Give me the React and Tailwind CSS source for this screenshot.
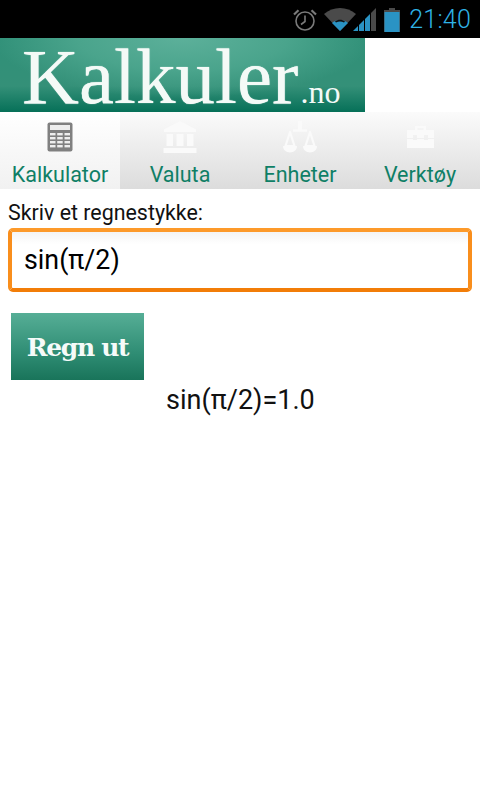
import React from 'react';

const green = 'text-[#0f7f66]';

const StatusIcons = () => (
  <div className="flex items-center h-full pr-[9px] justify-end">
    <svg width="26" height="26" viewBox="0 0 26 26" className="mr-[6px] mt-[1px]" fill="none" stroke="#7a7a7a" strokeWidth="1.6">
      <circle cx="13" cy="14" r="9" />
      <path d="M13 8.5V14.5L9 17.5" />
      <path d="M2 7.5 6.5 3.2M24 7.5 19.5 3.2" strokeWidth="2.2" />
    </svg>
    <svg width="32" height="24" viewBox="0 0 32 24" className="mt-[1px]">
      <path d="M0 6C9-2 23-2 32 6L16 23Z" fill="#4a4a4a" />
      <path d="M8 15C12 11 20 11 24 15L16 23Z" fill="#2a93c4" />
      <path d="M11 13.5C14 11 18 11 21 13.5L20 14.5C17.5 13 14.5 13 12 14.5Z" fill="#111" />
    </svg>
    <svg width="24" height="24" viewBox="0 0 24 24" className="-ml-[3px] mr-[7px] mt-[1px]">
      <path d="M0 23 5 18V23Z" fill="#2a93c4" />
      <path d="M6 17 11 12V23H6Z" fill="#2a93c4" />
      <path d="M12 11 17 6V23H12Z" fill="#2a93c4" />
      <path d="M18 5 23 0V23H18Z" fill="#4a4a4a" />
    </svg>
    <svg width="16" height="24" viewBox="0 0 16 24" className="mr-[9px] mt-[1px]">
      <path d="M5 0H11V2H16V24H0V2H5Z" fill="#4a4a4a" />
      <rect x="0.5" y="4" width="15" height="20" fill="#2a93c4" />
    </svg>
    <span className="text-[25px] leading-none text-[#2fb3e6] font-['Roboto',sans-serif] font-light tracking-[0.2px]">21:40</span>
  </div>
);

const CalcIcon = () => (
  <svg width="26" height="30" viewBox="0 0 26 30">
    <rect x="0.5" y="0.5" width="25" height="29" rx="2" fill="#808080" />
    <rect x="3" y="3" width="20" height="5" fill="#eeeeee" />
    {[11, 15, 19, 23].map((y) => (
      <g key={y} fill="#eeeeee">
        <rect x="3" y={y} width="5.5" height="2.4" />
        <rect x="10.2" y={y} width="5.5" height="2.4" />
        <rect x="17.5" y={y} width="5.5" height="2.4" />
      </g>
    ))}
  </svg>
);

const BankIcon = () => (
  <svg width="34" height="32" viewBox="0 0 34 32" fill="#fafafa">
    <path d="M17 0 33 8.5V11H1V8.5Z" />
    <path d="M3.5 13H10V25H3.5ZM13.5 13H20.5V25H13.5ZM24 13H30.5V25H24Z" />
    <rect x="0.5" y="27" width="33" height="5" />
  </svg>
);

const ScaleIcon = () => (
  <svg width="34" height="32" viewBox="0 0 34 32" fill="none" stroke="#fafafa" strokeWidth="2.2">
    <path d="M17 0V10" strokeWidth="4" />
    <path d="M10 9.5H24" strokeWidth="2.4" />
    <path d="M7 11 2.5 25H11.5Z" strokeLinejoin="round" />
    <path d="M27 11 22.5 25H31.5Z" strokeLinejoin="round" />
    <path d="M0 25H14C14 33.5 0 33.5 0 25Z" fill="#fafafa" stroke="none" />
    <path d="M20 25H34C34 33.5 20 33.5 20 25Z" fill="#fafafa" stroke="none" />
  </svg>
);

const BoxIcon = () => (
  <svg width="27" height="22" viewBox="0 0 27 22" fill="#fafafa">
    <path d="M8 0H19V4H27V12H21V9H17V12H10V9H6V12H0V4H8ZM10.5 2V4H16.5V2Z" fillRule="evenodd" />
    <path d="M0 13H6V14H10V13H17V14H21V13H27V22H0Z" />
  </svg>
);

const tabs = [
  { label: 'Kalkulator', icon: <CalcIcon />, active: true },
  { label: 'Valuta', icon: <BankIcon /> },
  { label: 'Enheter', icon: <ScaleIcon /> },
  { label: 'Verktøy', icon: <BoxIcon /> },
];

const App = () => {
  return (
    <div className="w-[480px] h-[800px] bg-white overflow-hidden font-['Roboto',sans-serif]">
      <div className="h-[38px] bg-black">
        <StatusIcons />
      </div>

      <div className="w-[365px] h-[74px] bg-[radial-gradient(ellipse_190px_60px_at_50%_0%,#5cb09a_0%,#4aa48c_55%,transparent_100%),linear-gradient(#309078_0%,#349078_65%,#067058_100%)] pl-[22px] pt-[3px] flex items-baseline">
        <span className="font-['Liberation_Serif',serif] text-[79px] leading-[71px] text-[#f4faf7] [text-shadow:0_0_1px_#ffffff]">Kalkuler</span>
        <span className="font-['Liberation_Serif',serif] text-[32px] leading-none ml-[2px] text-[#f4faf7]">.no</span>
      </div>

      <div className="relative grid grid-cols-4 h-[77px]">
        {tabs.map((tab) => (
          <div
            key={tab.label}
            className={`flex flex-col items-center ${tab.active ? 'bg-[linear-gradient(#ffffff,#f1f1f1)]' : 'bg-[linear-gradient(#fbfbfb,#dcdcdc)]'}`}
          >
            <div className="h-[49px] flex items-center justify-center pt-[1px]">{tab.icon}</div>
            <span className={`text-[21.5px] leading-[28px] ${green}`}>{tab.label}</span>
          </div>
        ))}
      </div>

      <div className="px-[8px] pt-[12px]">
        <div className="text-[21.4px] leading-[24px] text-[#111]">Skriv et regnestykke:</div>
        <div className="mt-[3px] h-[64px] border-[4px] border-t-[#fd9a2a] border-x-[#f98e1c] border-b-[#f27d08] rounded-[5px] bg-[linear-gradient(#f4f4f4,#ffffff_22%)] flex items-center pl-[12px] text-[26.8px] text-black">
          sin(π/2)
        </div>

        <div className="mt-[21px] ml-[3px] w-[133px] h-[67px] bg-[linear-gradient(#56ae96,#2f8d74_60%,#19745a)] flex items-center justify-center pt-[2px] font-['DejaVu_Serif',serif] font-bold text-[25px] tracking-[-1.3px] text-[#f6fbf9]">
          Regn ut
        </div>
        <div className="mt-[6px] pl-[158px] text-[27px] leading-[28px] text-[#111]">sin(π/2)=1.0</div>
      </div>
    </div>
  );
};

export default App;
